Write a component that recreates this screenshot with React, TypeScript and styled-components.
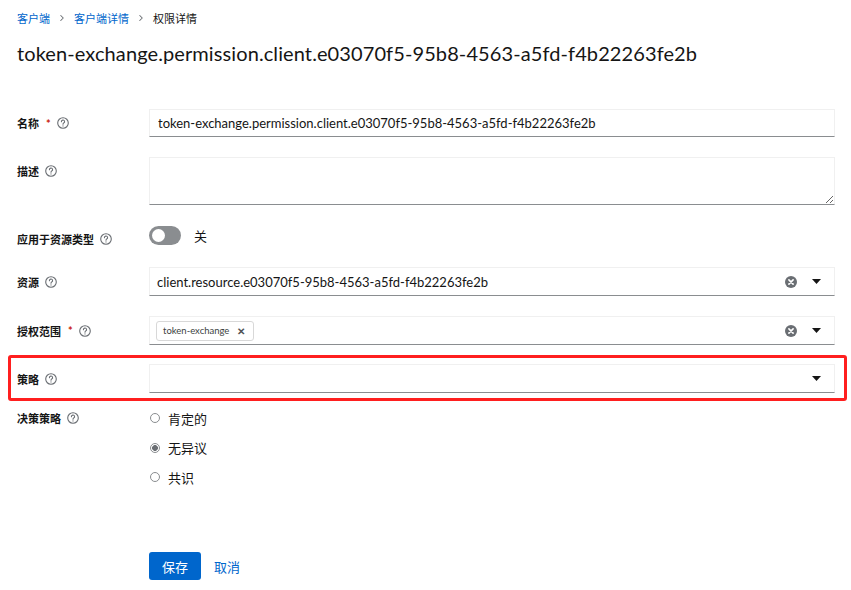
import React from 'react';
import styled, { createGlobalStyle } from 'styled-components';
import { ChevronRight } from 'lucide-react';

const GlobalStyle = createGlobalStyle`
  html, body {
    margin: 0;
    padding: 0;
    background: #fff;
  }
  body {
    font-family: Lato, "Noto Sans CJK SC", sans-serif;
    color: #151515;
  }
`;

const Page = styled.div`
  width: 851px;
  height: 590px;
  box-sizing: border-box;
  padding: 10px 16px 0 17px;
`;

const Breadcrumb = styled.nav`
  display: flex;
  align-items: center;
  height: 16px;
  font-size: 11px;
  gap: 7px;
`;

const Crumb = styled.span<{ $active?: boolean }>`
  color: ${(p) => (p.$active ? '#151515' : '#0066cc')};
`;

const Sep = styled.span`
  display: inline-flex;
  color: #6a6e73;
`;

const Title = styled.h1`
  margin: 13px 0 0;
  font-size: 20px;
  line-height: 28px;
  font-weight: 400;
  letter-spacing: 0.1px;
`;

const Form = styled.form`
  margin-top: 42px;
  display: flex;
  flex-direction: column;
  gap: 20px;
`;

const Row = styled.div<{ $marked?: boolean }>`
  position: relative;
  display: grid;
  grid-template-columns: 132px 1fr;
  align-items: start;
  ${(p) =>
    p.$marked &&
    `
    &::after {
      content: '';
      position: absolute;
      top: -9px;
      bottom: -8px;
      left: -9px;
      right: -12px;
      border: 3px solid #ff1f1f;
      border-radius: 3px;
      pointer-events: none;
    }
  `}
`;

const Label = styled.label<{ $h?: number }>`
  display: flex;
  align-items: center;
  height: ${(p) => p.$h ?? 28}px;
  font-size: 11px;
  font-weight: 700;
  gap: 6px;
`;

const Req = styled.span`
  color: #c9190b;
  font-size: 11px;
  margin-left: 1px;
`;

const HelpIcon = () => (
  <svg width="12" height="12" viewBox="0 0 12 12" fill="none" stroke="#6a6e73" strokeWidth="1.1">
    <circle cx="6" cy="6" r="5.3" />
    <path d="M4.4 4.7a1.6 1.6 0 1 1 2.3 1.4c-.5.25-.7.6-.7 1.1" strokeLinecap="round" />
    <circle cx="6" cy="8.9" r="0.6" fill="#6a6e73" stroke="none" />
  </svg>
);

const TextInput = styled.input`
  box-sizing: border-box;
  width: 100%;
  height: 28px;
  border: 1px solid #f0f0f0;
  border-bottom-color: #8a8d90;
  padding: 0 8px;
  font-family: Lato, "Noto Sans CJK SC", sans-serif;
  font-size: 13px;
  color: #151515;
  outline: none;
`;

const TextArea = styled.textarea`
  box-sizing: border-box;
  width: 100%;
  height: 48px;
  border: 1px solid #f0f0f0;
  border-bottom-color: #8a8d90;
  resize: vertical;
  padding: 6px 8px;
  font-family: Lato, sans-serif;
  font-size: 13px;
  outline: none;
`;

const SwitchWrap = styled.div`
  display: flex;
  align-items: center;
  gap: 13px;
  height: 20px;
  font-size: 13px;
`;

const Track = styled.span`
  position: relative;
  display: inline-block;
  width: 32px;
  height: 19px;
  border-radius: 10px;
  background: #8a8d90;
  &::before {
    content: '';
    position: absolute;
    left: 3px;
    top: 3px;
    width: 13px;
    height: 13px;
    border-radius: 50%;
    background: #fff;
  }
`;

const Select = styled.div`
  box-sizing: border-box;
  display: flex;
  align-items: center;
  height: 29px;
  border: 1px solid #f0f0f0;
  border-bottom-color: #8a8d90;
  padding: 0 6px 0 6px;
  font-size: 13px;
`;

const SelectValue = styled.div`
  flex: 1;
  display: flex;
  align-items: center;
  color: #151515;
`;

const Chip = styled.span`
  display: inline-flex;
  align-items: center;
  gap: 8px;
  height: 20px;
  box-sizing: border-box;
  border: 1px solid #d8d8d8;
  border-radius: 3px;
  padding: 0 8px 0 6px;
  font-size: 9.5px;
  color: #3c3f42;
`;

const ChipClose = styled.span`
  font-size: 10px;
  font-weight: 700;
  color: #4f5255;
`;

const Actions = styled.div`
  display: flex;
  align-items: center;
  gap: 15px;
  margin-right: 7px;
`;

const ClearIcon = () => (
  <svg width="12" height="12" viewBox="0 0 12 12">
    <circle cx="6" cy="6" r="6" fill="#6a6e73" />
    <path d="M3.9 3.9l4.2 4.2M8.1 3.9l-4.2 4.2" stroke="#fff" strokeWidth="1.6" strokeLinecap="round" />
  </svg>
);

const Caret = () => (
  <svg width="9" height="5" viewBox="0 0 9 5">
    <path d="M0 0h9L4.5 5z" fill="#151515" />
  </svg>
);

const RadioGroup = styled.div`
  display: flex;
  flex-direction: column;
  gap: 11.5px;
`;

const RadioItem = styled.label`
  display: flex;
  align-items: center;
  gap: 8px;
  height: 18px;
  padding-left: 1px;
  font-size: 13px;
`;

const Circle = styled.span<{ $checked?: boolean }>`
  box-sizing: border-box;
  width: 10px;
  height: 10px;
  border-radius: 50%;
  border: 1px solid #8a8d90;
  background: ${(p) => (p.$checked ? 'radial-gradient(circle, #6a6e73 0 2.6px, #fff 3.2px)' : '#fff')};
`;

const Footer = styled.div`
  display: flex;
  align-items: center;
  gap: 13px;
  margin: 66px 0 0 132px;
`;

const PrimaryButton = styled.button`
  height: 28px;
  padding: 0 13px;
  border: none;
  border-radius: 3px;
  background: #0066cc;
  color: #fff;
  font-family: Lato, "Noto Sans CJK SC", sans-serif;
  font-size: 13px;
`;

const LinkButton = styled.button`
  border: none;
  background: none;
  padding: 0;
  color: #0066cc;
  font-family: Lato, "Noto Sans CJK SC", sans-serif;
  font-size: 13px;
`;

const ID = 'e03070f5-95b8-4563-a5fd-f4b22263fe2b';

export default function App() {
  return (
    <>
      <GlobalStyle />
      <Page>
        <Breadcrumb>
          <Crumb>客户端</Crumb>
          <Sep>
            <ChevronRight size={10} strokeWidth={2.5} />
          </Sep>
          <Crumb>客户端详情</Crumb>
          <Sep>
            <ChevronRight size={10} strokeWidth={2.5} />
          </Sep>
          <Crumb $active>权限详情</Crumb>
        </Breadcrumb>
        <Title>token-exchange.permission.client.{ID}</Title>

        <Form onSubmit={(e) => e.preventDefault()}>
          <Row>
            <Label>
              名称<Req>*</Req>
              <HelpIcon />
            </Label>
            <TextInput defaultValue={`token-exchange.permission.client.${ID}`} />
          </Row>
          <Row>
            <Label>
              描述
              <HelpIcon />
            </Label>
            <TextArea />
          </Row>
          <Row>
            <Label $h={28}>
              应用于资源类型
              <HelpIcon />
            </Label>
            <SwitchWrap>
              <Track />
              <span>关</span>
            </SwitchWrap>
          </Row>
          <Row style={{ marginTop: -6 }}>
            <Label $h={29}>
              资源
              <HelpIcon />
            </Label>
            <Select>
              <SelectValue style={{ paddingLeft: 1 }}>client.resource.{ID}</SelectValue>
              <Actions>
                <ClearIcon />
                <Caret />
              </Actions>
            </Select>
          </Row>
          <Row>
            <Label $h={29}>
              授权范围<Req>*</Req>
              <HelpIcon />
            </Label>
            <Select>
              <SelectValue>
                <Chip>
                  token-exchange
                  <ChipClose>✕</ChipClose>
                </Chip>
              </SelectValue>
              <Actions>
                <ClearIcon />
                <Caret />
              </Actions>
            </Select>
          </Row>
          <Row $marked style={{ marginTop: -1 }}>
            <Label $h={29}>
              策略
              <HelpIcon />
            </Label>
            <Select>
              <SelectValue />
              <Actions>
                <Caret />
              </Actions>
            </Select>
          </Row>
          <Row style={{ marginTop: -4 }}>
            <Label $h={18}>
              决策策略
              <HelpIcon />
            </Label>
            <RadioGroup>
              <RadioItem>
                <Circle />
                肯定的
              </RadioItem>
              <RadioItem>
                <Circle $checked />
                无异议
              </RadioItem>
              <RadioItem>
                <Circle />
                共识
              </RadioItem>
            </RadioGroup>
          </Row>
        </Form>

        <Footer>
          <PrimaryButton>保存</PrimaryButton>
          <LinkButton>取消</LinkButton>
        </Footer>
      </Page>
    </>
  );
}
